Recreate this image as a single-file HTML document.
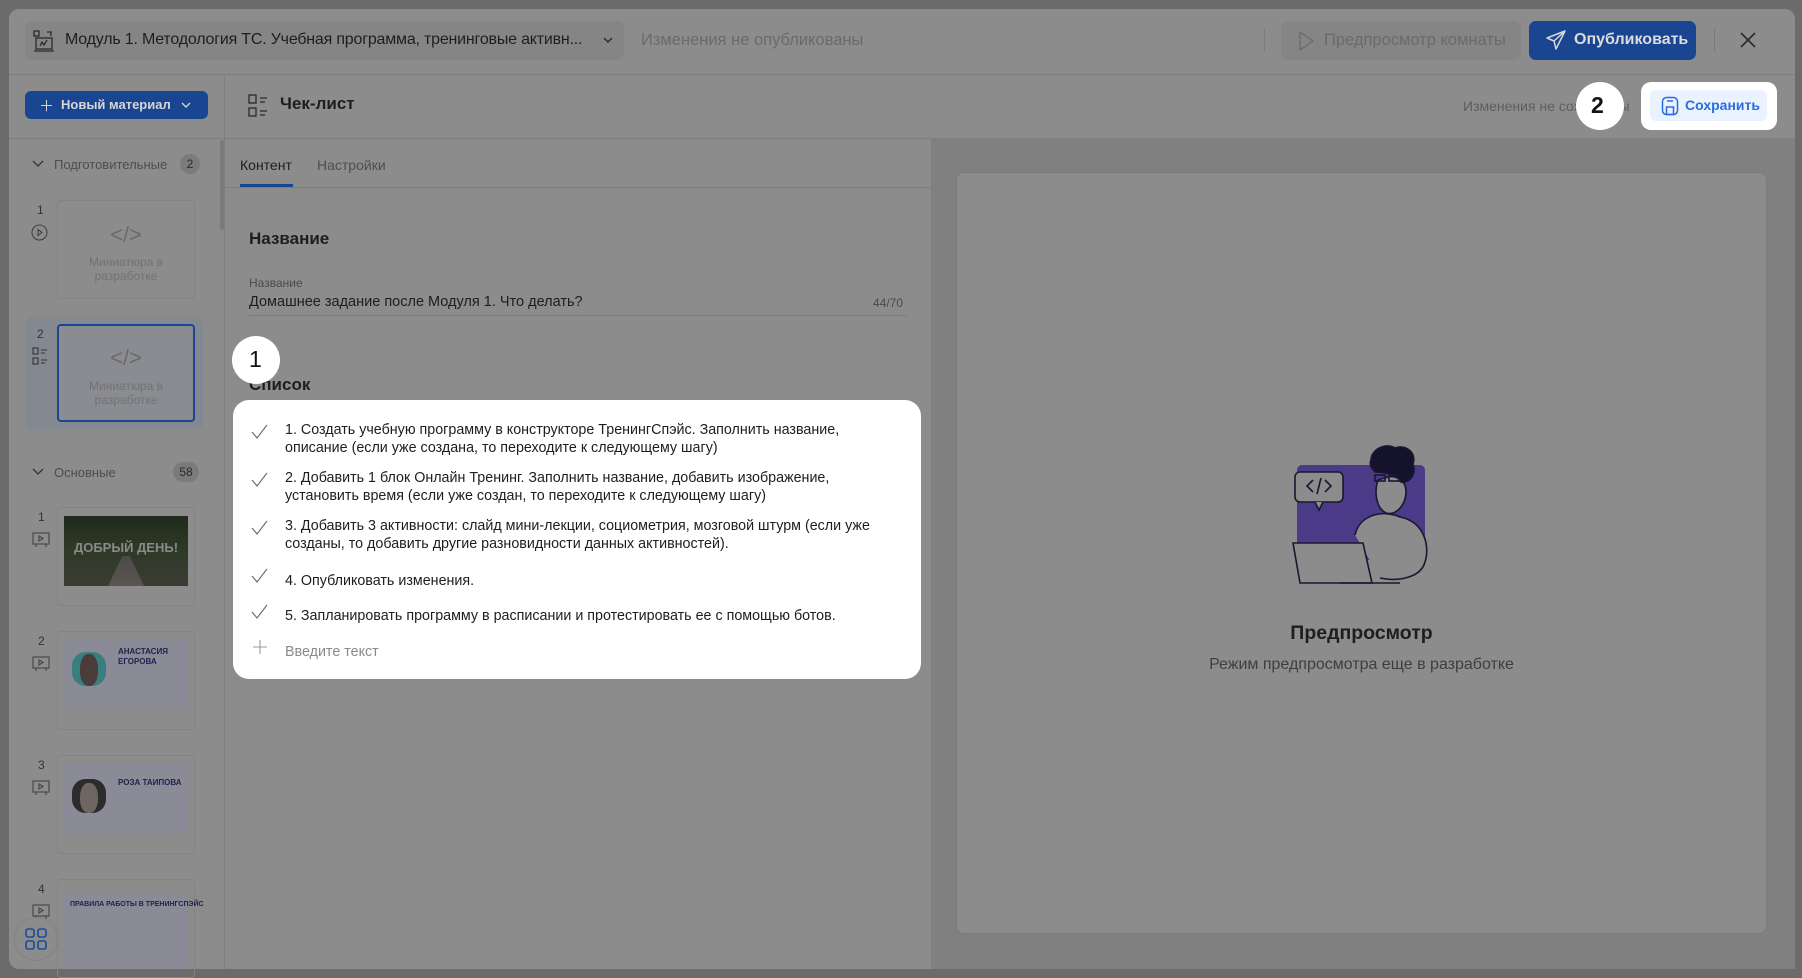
<!DOCTYPE html>
<html><head><meta charset="utf-8">
<style>
*{box-sizing:border-box;margin:0;padding:0}
body{width:1802px;height:977px;background:#6b6b6b;font-family:"Liberation Sans","DejaVu Sans",sans-serif;position:relative;overflow:hidden;color:#1e1e1e}
.a{position:absolute}
.app{left:9px;top:9px;width:1786px;height:960px;background:#8c8c8c;border-radius:10px;overflow:hidden}
.t{white-space:nowrap}
</style></head><body>
<div class="a app"></div>
<!-- header -->
<div class="a" style="left:9px;top:74px;width:1786px;height:1px;background:#7e7e7e"></div>
<div class="a" style="left:25px;top:21px;width:599px;height:39px;background:#858585;border-radius:7px"></div>
<svg class="a" style="left:32px;top:29px" width="24" height="24" viewBox="0 0 24 24" fill="none" stroke="#2a2a2a" stroke-width="1.3"><rect x="2" y="2" width="5" height="5"/><rect x="4" y="9" width="16" height="11"/><path d="M2 22h20M8 17l2-4 2 3 3-5M15 3h4v4"/></svg>
<div class="a t" style="left:65px;top:31px;font-size:16px;color:#1e1e1e;letter-spacing:-0.2px">Модуль 1. Методология ТС. Учебная программа, тренинговые активн...</div>
<svg class="a" style="left:602px;top:35px" width="12" height="10" viewBox="0 0 12 10"><path d="M2 3l4 4 4-4" stroke="#2a2a2a" fill="none" stroke-width="1.4"/></svg>
<div class="a t" style="left:641px;top:31px;font-size:16.5px;color:#6a6a6a">Изменения не опубликованы</div>
<div class="a" style="left:1264px;top:28px;width:1px;height:24px;background:#7c7c7c"></div>
<div class="a" style="left:1281px;top:21px;width:240px;height:39px;background:#858585;border-radius:7px"></div>
<svg class="a" style="left:1296px;top:30px" width="20" height="22" viewBox="0 0 20 22"><path d="M4 2l13 9-13 9z" fill="none" stroke="#6e6e6e" stroke-width="1.5" stroke-linejoin="round"/></svg>
<div class="a t" style="left:1324px;top:31px;font-size:16.5px;color:#6a6a6a">Предпросмотр комнаты</div>
<div class="a" style="left:1529px;top:21px;width:167px;height:39px;background:#1a4590;border-radius:7px"></div>
<svg class="a" style="left:1545px;top:29px" width="22" height="22" viewBox="0 0 22 22" fill="none" stroke="#d8d8d8" stroke-width="1.5" stroke-linejoin="round"><path d="M20 2L2 9l7 3 2 8z M9 12l11-10"/></svg>
<div class="a t" style="left:1574px;top:31px;font-size:16px;color:#dcdcdc;font-weight:bold">Опубликовать</div>
<div class="a" style="left:1714px;top:28px;width:1px;height:24px;background:#7c7c7c"></div>
<svg class="a" style="left:1739px;top:31px" width="18" height="18" viewBox="0 0 18 18"><path d="M2 2l14 14M16 2L2 16" stroke="#2a2a2a" stroke-width="1.6"/></svg>
<!-- toolbar -->
<div class="a" style="left:9px;top:138px;width:1786px;height:1px;background:#7e7e7e"></div>
<div class="a" style="left:224px;top:74px;width:1px;height:895px;background:#7e7e7e"></div>
<div class="a" style="left:25px;top:91px;width:183px;height:28px;background:#1a4590;border-radius:6px"></div>
<div class="a t" style="left:39px;top:95px;font-size:15px;color:#d0d0d0">＋</div>
<div class="a t" style="left:61px;top:97px;font-size:13px;color:#d6d6d6;font-weight:bold">Новый материал</div>
<svg class="a" style="left:180px;top:100px" width="12" height="10" viewBox="0 0 12 10"><path d="M2 3l4 4 4-4" stroke="#d0d0d0" fill="none" stroke-width="1.4"/></svg>
<svg class="a" style="left:248px;top:94px" width="26" height="24" viewBox="0 0 26 24" fill="none" stroke="#2a2a2a" stroke-width="1.3"><rect x="1" y="1" width="7" height="8"/><rect x="1" y="14" width="7" height="8"/><path d="M12 4h7M12 8h5M12 17h7M12 21h5"/></svg>
<div class="a t" style="left:280px;top:94px;font-size:17px;font-weight:bold;color:#1e1e1e">Чек-лист</div>
<div class="a t" style="left:1463px;top:98px;font-size:14px;color:#5e5e5e">Изменения не сохранены</div>
<div class="a" style="left:1576px;top:82px;width:48px;height:48px;border-radius:50%;background:#fff"></div>
<div class="a t" style="left:1591px;top:92px;font-size:23px;font-weight:bold;color:#111">2</div>
<div class="a" style="left:1641px;top:82px;width:136px;height:48px;border-radius:10px;background:#fff"></div>
<div class="a" style="left:1650px;top:90px;width:117px;height:31px;border-radius:6px;background:#eaf2ff"></div>
<svg class="a" style="left:1661px;top:96px" width="18" height="20" viewBox="0 0 18 20" fill="none" stroke="#2b6de0" stroke-width="1.5"><rect x="1.5" y="1.5" width="15" height="17" rx="4"/><rect x="5.5" y="11" width="7" height="7.5"/><path d="M6 5h6"/></svg>
<div class="a t" style="left:1685px;top:97px;font-size:14px;color:#2b6de0;font-weight:bold">Сохранить</div>
<!-- sidebar -->
<div class="a" style="left:220px;top:140px;width:4px;height:90px;background:#7a7a7a;border-radius:2px"></div>
<svg class="a" style="left:31px;top:159px" width="14" height="10" viewBox="0 0 14 10"><path d="M2 2l5 5 5-5" stroke="#333" fill="none" stroke-width="1.3"/></svg>
<div class="a t" style="left:54px;top:157px;font-size:13px;color:#4e4e4e">Подготовительные</div>
<div class="a" style="left:180px;top:154px;width:20px;height:20px;border-radius:10px;background:#7b7b7b;font-size:12px;text-align:center;line-height:20px;color:#2a2a2a">2</div>
<div class="a t" style="left:37px;top:203px;font-size:12px;color:#333">1</div>
<svg class="a" style="left:31px;top:224px" width="17" height="17" viewBox="0 0 17 17" fill="none" stroke="#444" stroke-width="1.1"><circle cx="8.5" cy="8.5" r="7.5"/><path d="M7 5.5l4 3-4 3z"/></svg>
<div class="a" style="left:57px;top:200px;width:138px;height:99px;border:1px solid #838383;border-radius:4px"></div>
<div class="a t" style="left:57px;top:222px;width:138px;text-align:center;font-size:22px;color:#6a6a6a">&lt;/&gt;</div>
<div class="a" style="left:57px;top:255px;width:138px;text-align:center;font-size:12px;color:#727272;line-height:14px">Миниатюра в<br>разработке</div>
<div class="a" style="left:25px;top:317px;width:178px;height:112px;background:#848891;border-radius:6px"></div>
<div class="a t" style="left:37px;top:327px;font-size:12px;color:#333">2</div>
<svg class="a" style="left:32px;top:347px" width="16" height="18" viewBox="0 0 16 18" fill="none" stroke="#333" stroke-width="1.1"><rect x="1" y="1" width="5" height="6"/><rect x="1" y="11" width="5" height="6"/><path d="M9 3h6M9 6h4M9 13h6M9 16h4"/></svg>
<div class="a" style="left:57px;top:324px;width:138px;height:98px;border:2px solid #1a4590;border-radius:4px;background:#8a8c91"></div>
<div class="a t" style="left:57px;top:345px;width:138px;text-align:center;font-size:22px;color:#6a6a6a">&lt;/&gt;</div>
<div class="a" style="left:57px;top:379px;width:138px;text-align:center;font-size:12px;color:#727272;line-height:14px">Миниатюра в<br>разработке</div>
<svg class="a" style="left:31px;top:467px" width="14" height="10" viewBox="0 0 14 10"><path d="M2 2l5 5 5-5" stroke="#333" fill="none" stroke-width="1.3"/></svg>
<div class="a t" style="left:54px;top:465px;font-size:13px;color:#4e4e4e">Основные</div>
<div class="a" style="left:173px;top:462px;width:26px;height:20px;border-radius:10px;background:#7b7b7b;font-size:12px;text-align:center;line-height:20px;color:#2a2a2a">58</div>
<!-- thumbs -->
<div class="a t" style="left:38px;top:510px;font-size:12px;color:#333">1</div>
<svg class="a" style="left:32px;top:532px" width="18" height="16" viewBox="0 0 18 16" fill="none" stroke="#444" stroke-width="1.1"><rect x="1" y="1" width="16" height="11"/><path d="M7 4l4 2.5-4 2.5z M4 12v3M14 12v3"/></svg>
<div class="a" style="left:57px;top:507px;width:138px;height:99px;border:1px solid #838383;border-radius:4px"></div>
<div class="a" style="left:64px;top:516px;width:124px;height:70px;background:linear-gradient(180deg,#1f2a1c,#2f3a27 50%,#3a3c34);"></div>
<div class="a" style="left:108px;top:556px;width:36px;height:30px;background:linear-gradient(180deg,#4a4b48,#5a5550);clip-path:polygon(40% 0,60% 0,100% 100%,0 100%)"></div>
<div class="a t" style="left:64px;top:540px;width:124px;text-align:center;font-size:13px;font-weight:bold;color:#8a8a8a">ДОБРЫЙ ДЕНЬ!</div>
<div class="a t" style="left:38px;top:634px;font-size:12px;color:#333">2</div>
<svg class="a" style="left:32px;top:656px" width="18" height="16" viewBox="0 0 18 16" fill="none" stroke="#444" stroke-width="1.1"><rect x="1" y="1" width="16" height="11"/><path d="M7 4l4 2.5-4 2.5z M4 12v3M14 12v3"/></svg>
<div class="a" style="left:57px;top:631px;width:138px;height:99px;border:1px solid #838383;border-radius:4px"></div>
<div class="a" style="left:64px;top:639px;width:124px;height:70px;background:#8a8b96"></div>
<div class="a" style="left:72px;top:652px;width:34px;height:34px;border-radius:40%;background:#3a7f80"></div>
<div class="a" style="left:80px;top:654px;width:18px;height:32px;border-radius:45%;background:#4a3c38"></div>
<div class="a" style="left:118px;top:647px;font-size:8px;font-weight:bold;color:#222250;line-height:10px">АНАСТАСИЯ<br>ЕГОРОВА</div>
<div class="a t" style="left:38px;top:758px;font-size:12px;color:#333">3</div>
<svg class="a" style="left:32px;top:780px" width="18" height="16" viewBox="0 0 18 16" fill="none" stroke="#444" stroke-width="1.1"><rect x="1" y="1" width="16" height="11"/><path d="M7 4l4 2.5-4 2.5z M4 12v3M14 12v3"/></svg>
<div class="a" style="left:57px;top:755px;width:138px;height:99px;border:1px solid #838383;border-radius:4px"></div>
<div class="a" style="left:64px;top:763px;width:124px;height:70px;background:#8a8b96"></div>
<div class="a" style="left:72px;top:779px;width:34px;height:34px;border-radius:40%;background:#2c2c2c"></div>
<div class="a" style="left:80px;top:783px;width:18px;height:30px;border-radius:45%;background:#6e6660"></div>
<div class="a t" style="left:118px;top:778px;font-size:8px;font-weight:bold;color:#222250">РОЗА ТАИПОВА</div>
<div class="a t" style="left:38px;top:882px;font-size:12px;color:#333">4</div>
<svg class="a" style="left:32px;top:904px" width="18" height="16" viewBox="0 0 18 16" fill="none" stroke="#444" stroke-width="1.1"><rect x="1" y="1" width="16" height="11"/><path d="M7 4l4 2.5-4 2.5z M4 12v3M14 12v3"/></svg>
<div class="a" style="left:57px;top:879px;width:138px;height:99px;border:1px solid #838383;border-radius:4px"></div>
<div class="a" style="left:64px;top:893px;width:124px;height:76px;background:#8a8b96"></div>
<div class="a t" style="left:70px;top:901px;font-size:7px;font-weight:bold;color:#222250">ПРАВИЛА РАБОТЫ В ТРЕНИНГСПЭЙС</div>
<div class="a" style="left:14px;top:917px;width:44px;height:44px;border-radius:50%;background:#8c8c8c;border:1px solid #828282"></div>
<svg class="a" style="left:25px;top:928px" width="22" height="22" viewBox="0 0 22 22" fill="none" stroke="#1a4aa0" stroke-width="1.6"><rect x="1" y="1" width="8" height="8" rx="2"/><rect x="13" y="1" width="8" height="8" rx="2"/><rect x="1" y="13" width="8" height="8" rx="2"/><rect x="13" y="13" width="8" height="8" rx="2"/></svg>
<!-- middle -->
<div class="a t" style="left:240px;top:157px;font-size:14px;color:#1e1e1e">Контент</div>
<div class="a t" style="left:317px;top:157px;font-size:14px;color:#4e4e4e">Настройки</div>
<div class="a" style="left:225px;top:187px;width:706px;height:1px;background:#7e7e7e"></div>
<div class="a" style="left:240px;top:184px;width:53px;height:3px;background:#1a4590"></div>
<div class="a" style="left:931px;top:139px;width:864px;height:830px;background:#808080"></div>
<div class="a t" style="left:249px;top:229px;font-size:17px;font-weight:bold;color:#1e1e1e">Название</div>
<div class="a t" style="left:249px;top:276px;font-size:12px;color:#4a4a4a">Название</div>
<div class="a t" style="left:249px;top:294px;font-size:14.5px;color:#1e1e1e">Домашнее задание после Модуля 1. Что делать?</div>
<div class="a t" style="left:873px;top:296px;font-size:12px;color:#4a4a4a">44/70</div>
<div class="a" style="left:249px;top:315px;width:658px;height:1px;background:#7a7a7a"></div>
<div class="a t" style="left:249px;top:375px;font-size:17px;font-weight:bold;color:#1e1e1e">Список</div>
<div class="a" style="left:232px;top:336px;width:48px;height:48px;border-radius:50%;background:#fff"></div>
<div class="a t" style="left:249px;top:346px;font-size:23px;color:#111">1</div>
<div class="a" style="left:233px;top:400px;width:688px;height:279px;background:#fff;border-radius:16px"></div>
<div class="a" style="left:285px;top:421px;width:620px;font-size:14.3px;line-height:18px;color:#1e1e1e">
<div style="height:48px">1. Создать учебную программу в конструкторе ТренингСпэйс. Заполнить название, описание (если уже создана, то переходите к следующему шагу)</div>
<div style="height:48px">2. Добавить 1 блок Онлайн Тренинг. Заполнить название, добавить изображение, установить время (если уже создан, то переходите к следующему шагу)</div>
<div style="height:55px">3. Добавить 3 активности: слайд мини-лекции, социометрия, мозговой штурм (если уже созданы, то добавить другие разновидности данных активностей).</div>
<div style="height:35px">4. Опубликовать изменения.</div>
<div style="height:36px">5. Запланировать программу в расписании и протестировать ее с помощью ботов.</div>
<div style="color:#8a8a8a">Введите текст</div>
</div>
<svg class="a" style="left:250px;top:420px" width="20" height="240" viewBox="0 0 20 240" fill="none" stroke="#666" stroke-width="1.1">
<path d="M2 12l5 6 10-13"/><path d="M2 60l5 6 10-13"/><path d="M2 108l5 6 10-13"/><path d="M2 156l5 6 10-13"/><path d="M2 192l5 6 10-13"/><path d="M10 220v14M3 227h14" stroke="#999"/></svg>
<!-- preview -->
<div class="a" style="left:956px;top:172px;width:811px;height:762px;background:#8c8c8c;border:1px solid #7a7a7a;border-radius:8px"></div>
<svg class="a" style="left:1285px;top:440px" width="160" height="145" viewBox="0 0 160 145" fill="none" stroke="#1a1830" stroke-width="1.6">
<rect x="12" y="25" width="128" height="95" rx="5" fill="#4a3a88" stroke="none"/>
<rect x="10" y="32" width="48" height="30" rx="5" fill="#8c8c8c"/>
<path d="M30 62l4 8 4-8" fill="#8c8c8c"/>
<path d="M28 40l-6 6 6 6M40 40l6 6-6 6M36 38l-4 16"/>
<path d="M70 95c5-22 30-25 45-18 25 5 30 30 25 45-4 15-25 20-45 16" fill="#8c8c8c"/>
<path d="M93 40c-4 12-2 28 8 33 10 3 20-8 20-22 0-10-10-16-18-14z" fill="#8c8c8c"/>
<path d="M86 20c0-10 14-18 24-12 10-4 22 4 18 16 4 10-4 20-12 18-4-8-18-10-26-10-4-4-6-8-4-12z" fill="#14122c"/>
<rect x="90" y="35" width="10" height="6"/><rect x="104" y="35" width="10" height="6"/>
<path d="M8 103h70l9 40H15z" fill="#8c8c8c"/>
<path d="M55 143h60"/>
</svg>
<div class="a t" style="left:956px;top:622px;width:811px;text-align:center;font-size:19.5px;font-weight:bold;color:#1e1e1e">Предпросмотр</div>
<div class="a t" style="left:956px;top:656px;width:811px;text-align:center;font-size:16px;color:#3e3e3e">Режим предпросмотра еще в разработке</div>
</body></html>
